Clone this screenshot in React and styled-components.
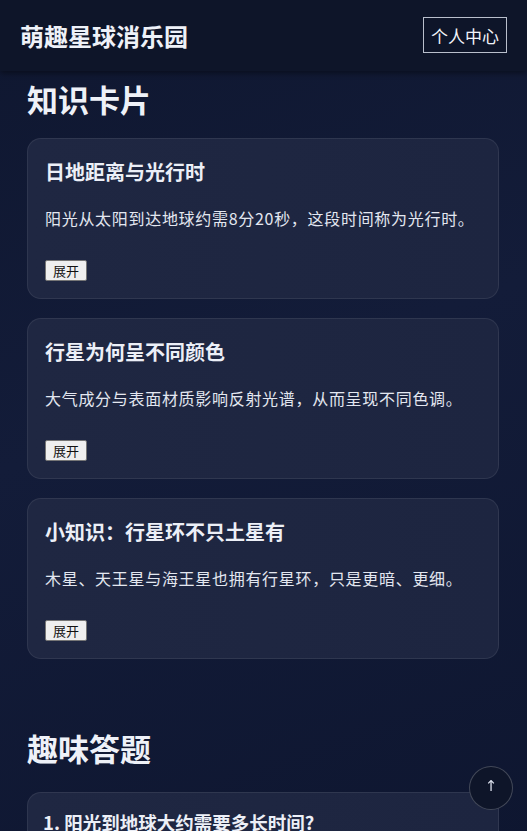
import React from 'react';
import styled, { createGlobalStyle } from 'styled-components';

const GlobalStyle = createGlobalStyle`
  html, body {
    margin: 0;
    padding: 0;
    background: #101933;
  }
  body {
    font-family: "Noto Sans CJK SC", "Noto Sans", sans-serif;
    color: #e6ebf5;
    overflow: hidden;
  }
`;

const Page = styled.div`
  min-height: 100vh;
  background: linear-gradient(160deg, #0f1730 0%, #131c39 45%, #0e1630 100%);
`;

const Header = styled.header`
  height: 71px;
  display: flex;
  align-items: center;
  justify-content: space-between;
  padding: 0 20px;
  background: #0e1529;
  box-shadow: 0 2px 6px rgba(0, 0, 0, 0.45);
  position: relative;
  z-index: 2;
`;

const Logo = styled.h1`
  margin: 0;
  font-size: 24px;
  font-weight: 700;
  color: #eef1f8;
`;

const ProfileButton = styled.button`
  font-family: "Noto Sans CJK SC", sans-serif;
  font-size: 17px;
  color: #f2f4fa;
  background: transparent;
  border: 1px solid #b9bfcc;
  padding: 0 6px;
  height: 36px;
  width: 84px;
  margin-top: -1px;
  cursor: pointer;
`;

const Main = styled.main`
  padding: 0 28px 0 27px;
`;

const Section = styled.section`
  padding-top: ${(p) => p.$top || 0}px;
`;

const SectionTitle = styled.h2`
  margin: 0 0 ${(p) => p.$gap || 22}px;
  font-size: 31px;
  line-height: 42px;
  font-weight: 700;
  color: #eef1f8;
`;

const CardList = styled.div`
  display: flex;
  flex-direction: column;
  gap: 19px;
`;

const Card = styled.article`
  background: linear-gradient(90deg, #1f2742 0%, #1d2540 100%);
  border: 1px solid rgba(255, 255, 255, 0.08);
  border-radius: 14px;
  padding: 19px 17px 17px;
`;

const CardTitle = styled.h3`
  margin: 0;
  font-size: 20px;
  line-height: 27px;
  font-weight: 700;
  color: #eceff7;
`;

const CardText = styled.p`
  margin: 21px 0 30px;
  font-size: 16px;
  line-height: 24px;
  letter-spacing: 0.7px;
  color: #e3e7f0;
`;

const ToggleButton = styled.button`
  display: block;
  font-family: "Noto Sans CJK SC", sans-serif;
  font-size: 13px;
  line-height: 17px;
  height: 21px;
  width: 42px;
  padding: 0;
  color: #111;
  background: #efefef;
  border: 1px solid #767676;
  border-radius: 2px;
`;

const QuizCard = styled(Card)`
  padding-top: 16px;
  border-bottom-left-radius: 0;
  border-bottom-right-radius: 0;
`;

const QuizTitle = styled(CardTitle)`
  font-size: 18.5px;
  margin-left: -2px;
`;

const ScrollTop = styled.button`
  position: fixed;
  right: 14px;
  bottom: 21px;
  width: 44px;
  height: 44px;
  border-radius: 50%;
  background: #0e1529;
  border: 1px solid rgba(255, 255, 255, 0.22);
  color: #d9deea;
  font-family: "DejaVu Sans", sans-serif;
  font-size: 15px;
  line-height: 1;
  padding: 0 0 3px;
  display: flex;
  align-items: center;
  justify-content: center;
  z-index: 3;
`;

const cards = [
  {
    title: '日地距离与光行时',
    text: '阳光从太阳到达地球约需8分20秒，这段时间称为光行时。',
  },
  {
    title: '行星为何呈不同颜色',
    text: '大气成分与表面材质影响反射光谱，从而呈现不同色调。',
  },
  {
    title: '小知识：行星环不只土星有',
    text: '木星、天王星与海王星也拥有行星环，只是更暗、更细。',
  },
];

const App = () => {
  return (
    <Page>
      <GlobalStyle />
      <Header>
        <Logo>萌趣星球消乐园</Logo>
        <ProfileButton>个人中心</ProfileButton>
      </Header>
      <Main>
        <Section $top={7}>
          <SectionTitle $gap={18}>知识卡片</SectionTitle>
          <CardList>
            {cards.map((c) => (
              <Card key={c.title}>
                <CardTitle>{c.title}</CardTitle>
                <CardText>{c.text}</CardText>
                <ToggleButton>展开</ToggleButton>
              </Card>
            ))}
          </CardList>
        </Section>
        <Section $top={68}>
          <SectionTitle $gap={23}>趣味答题</SectionTitle>
          <QuizCard>
            <QuizTitle>1. 阳光到地球大约需要多长时间?</QuizTitle>
          </QuizCard>
        </Section>
      </Main>
      <ScrollTop>↑</ScrollTop>
    </Page>
  );
};

export default App;
